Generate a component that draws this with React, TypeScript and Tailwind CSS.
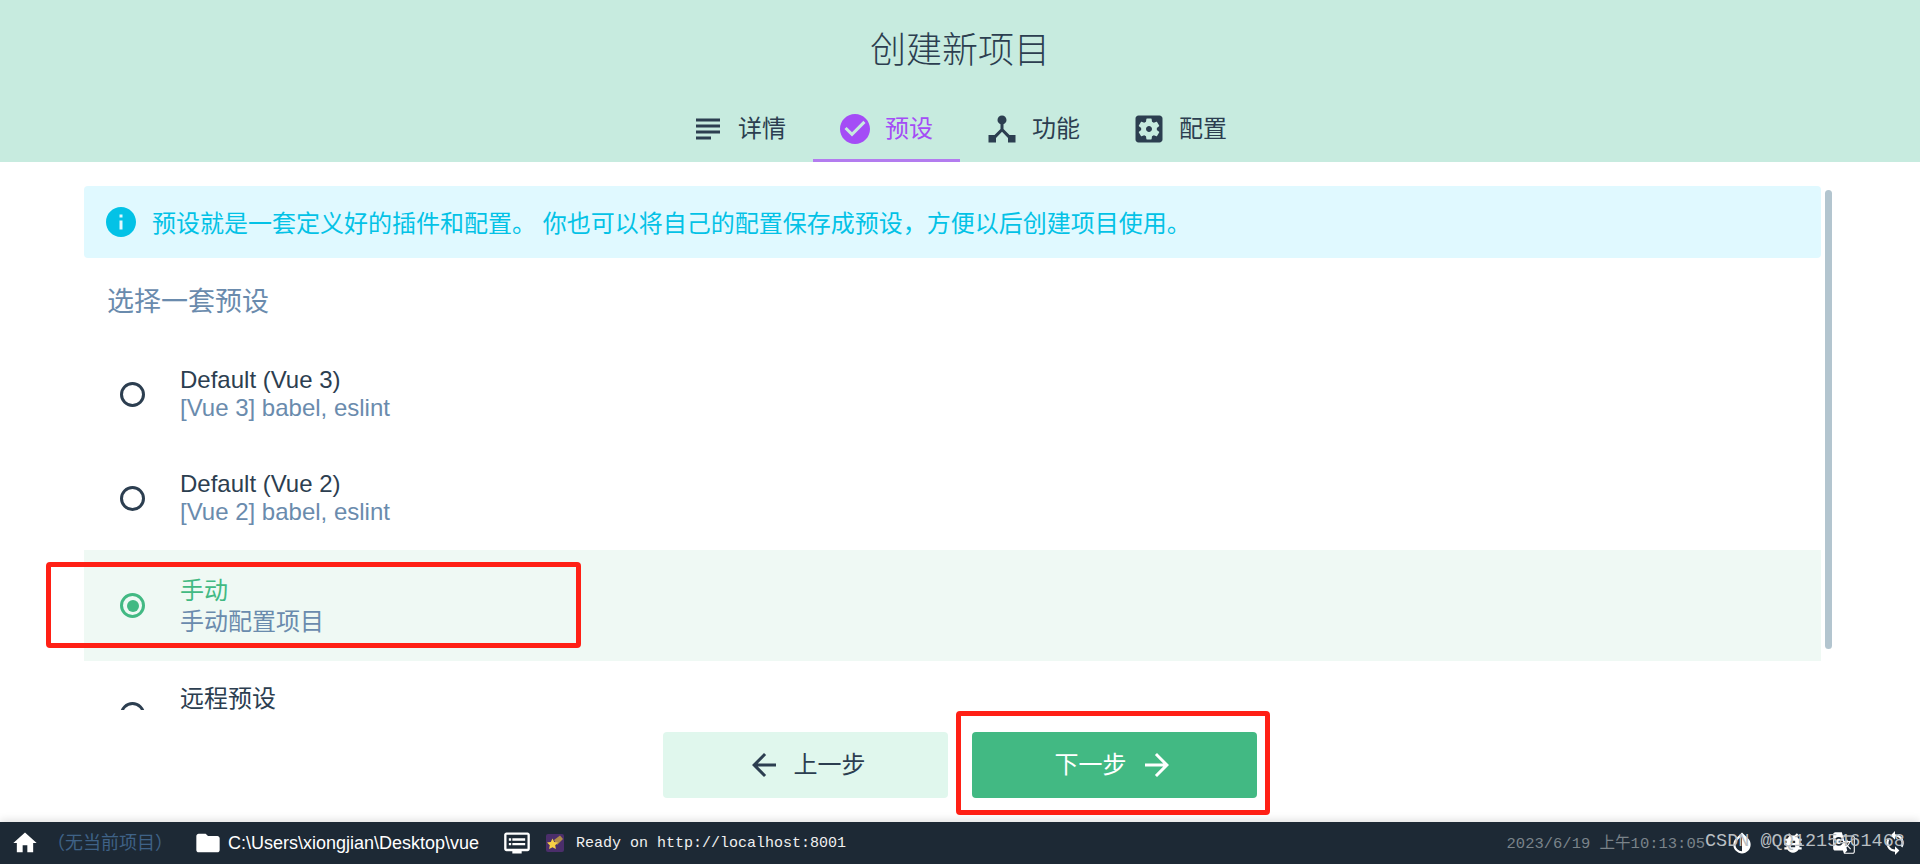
const CJK = '"Liberation Sans", "Noto Sans CJK SC", sans-serif';

const Icon = ({ d, className }: { d: string; className?: string }) => (
  <svg viewBox="0 0 24 24" fill="currentColor" className={className}>
    <path d={d} />
  </svg>
);

const icons = {
  subject: 'M14 17H4v2h10v-2zm6-8H4v2h16V9zM4 15h16v-2H4v2zM4 5v2h16V5H4z',
  check: 'M12 2C6.48 2 2 6.48 2 12s4.48 10 10 10 10-4.48 10-10S17.52 2 12 2zm-2 15l-5-5 1.41-1.41L10 14.17l7.59-7.59L19 8l-9 9z',
  hub: 'M17 16l-4-4V8.82C14.16 8.4 15 7.3 15 6c0-1.66-1.34-3-3-3S9 4.34 9 6c0 1.3.84 2.4 2 2.82V12l-4 4H3v5h5v-3.05l4-4.2 4 4.2V21h5v-5h-4z',
  settings: 'M12 10c-1.1 0-2 .9-2 2s.9 2 2 2 2-.9 2-2-.9-2-2-2zm7-7H5c-1.11 0-2 .9-2 2v14c0 1.1.89 2 2 2h14c1.11 0 2-.9 2-2V5c0-1.1-.89-2-2-2zm-1.75 9c0 .23-.02.46-.05.68l1.48 1.16c.13.11.17.3.08.45l-1.4 2.42c-.09.15-.27.21-.43.15l-1.74-.7c-.36.28-.76.51-1.18.69l-.26 1.85c-.03.17-.18.3-.35.3h-2.8c-.17 0-.32-.13-.35-.29l-.26-1.85c-.43-.18-.82-.41-1.18-.69l-1.74.7c-.16.06-.34 0-.43-.15l-1.4-2.42c-.09-.15-.05-.34.08-.45l1.48-1.16c-.03-.23-.05-.46-.05-.69 0-.23.02-.46.05-.68l-1.48-1.16c-.13-.11-.17-.3-.08-.45l1.4-2.42c.09-.15.27-.21.43-.15l1.74.7c.36-.28.76-.51 1.18-.69l.26-1.85c.03-.17.18-.3.35-.3h2.8c.17 0 .32.13.35.29l.26 1.85c.43.18.82.41 1.18.69l1.74-.7c.16-.06.34 0 .43.15l1.4 2.42c.09.15.05.34-.08.45l-1.48 1.16c.03.23.05.46.05.69z',
  info: 'M12 2C6.48 2 2 6.48 2 12s4.48 10 10 10 10-4.48 10-10S17.52 2 12 2zm1 15h-2v-6h2v6zm0-8h-2V7h2v2z',
  back: 'M20 11H7.83l5.59-5.59L12 4l-8 8 8 8 1.41-1.41L7.83 13H20v-2z',
  forward: 'M12 4l-1.41 1.41L16.17 11H4v2h12.17l-5.58 5.59L12 20l8-8z',
  home: 'M10 20v-6h4v6h5v-8h3L12 3 2 12h3v8z',
  folder: 'M10 4H4c-1.1 0-1.99.9-1.99 2L2 18c0 1.1.9 2 2 2h16c1.1 0 2-.9 2-2V8c0-1.1-.9-2-2-2h-8l-2-2z',
  dvr: 'M21 3H3c-1.1 0-2 .9-2 2v12c0 1.1.9 2 2 2h5v2h8v-2h5c1.1 0 1.99-.9 1.99-2L23 5c0-1.1-.9-2-2-2zm0 14H3V5h18v12zm-2-9H8v2h11V8zm0 4H8v2h11v-2zM7 8H5v2h2V8zm0 4H5v2h2v-2z',
  drop: 'M17.66 7.93L12 2.27 6.34 7.93c-3.12 3.12-3.12 8.19 0 11.31C7.9 20.8 9.95 21.58 12 21.58c2.05 0 4.1-.78 5.66-2.34 3.12-3.12 3.12-8.19 0-11.31zM12 19.59c-1.6 0-3.11-.62-4.24-1.76C6.62 16.69 6 15.19 6 13.59s.62-3.11 1.76-4.24L12 5.1v14.49z',
  bug: 'M20 8h-2.81c-.45-.78-1.07-1.45-1.82-1.96L17 4.41 15.59 3l-2.17 2.17C12.96 5.06 12.49 5 12 5c-.49 0-.96.06-1.41.17L8.41 3 7 4.41l1.62 1.63C7.88 6.55 7.26 7.22 6.81 8H4v2h2.09c-.05.33-.09.66-.09 1v1H4v2h2v1c0 .34.04.67.09 1H4v2h2.81c1.04 1.79 2.97 3 5.19 3s4.15-1.21 5.19-3H20v-2h-2.09c.05-.33.09-.66.09-1v-1h2v-2h-2v-1c0-.34-.04-.67-.09-1H20V8zm-6 8h-4v-2h4v2zm0-4h-4v-2h4v2z',
  translate: 'M20 5h-9.12L10 2H4c-1.1 0-2 .9-2 2v13c0 1.1.9 2 2 2h7l1 3h8c1.1 0 2-.9 2-2V7c0-1.1-.9-2-2-2zM7.17 14.59c-2.25 0-4.09-1.83-4.09-4.09s1.83-4.09 4.09-4.09c1.04 0 1.99.37 2.74 1.07l.07.06-1.23 1.18-.06-.05c-.29-.27-.78-.59-1.52-.59-1.31 0-2.38 1.09-2.38 2.42s1.07 2.42 2.38 2.42c1.37 0 1.96-.87 2.12-1.46H7.08V9.91h3.95l.01.07c.04.21.05.4.05.61 0 2.35-1.61 4-3.92 4zm6.03-1.71c.33.6.74 1.18 1.19 1.7l-.54.53-.65-2.23zm.77-.76h-.99l-.31-1.04h3.99s-.34 1.31-1.56 2.74c-.52-.62-.89-1.23-1.13-1.7zM21 20c0 .55-.45 1-1 1h-7l2-2-.81-2.77.92-.92L17.79 18l.73-.73-2.71-2.68c.9-1.03 1.6-2.25 1.92-3.51H19v-1.04h-3.64V9h-1.04v1.04h-1.96L11.18 6H20c.55 0 1 .45 1 1v13z',
  sync: 'M12 4V1L8 5l4 4V6c3.31 0 6 2.69 6 6 0 1.01-.25 1.97-.7 2.8l1.46 1.46C19.54 15.03 20 13.57 20 12c0-4.42-3.58-8-8-8zm0 14c-3.31 0-6-2.69-6-6 0-1.01.25-1.97.7-2.8L5.24 7.74C4.46 8.97 4 10.43 4 12c0 4.42 3.58 8 8 8v3l4-4-4-4v3z',
};

const tabs = [
  { label: '详情', icon: icons.subject },
  { label: '预设', icon: icons.check, active: true },
  { label: '功能', icon: icons.hub },
  { label: '配置', icon: icons.settings },
];

const presets = [
  { name: 'Default (Vue 3)', desc: '[Vue 3] babel, eslint', h: 'h-[104px]', lh: 'leading-[28px]' },
  { name: 'Default (Vue 2)', desc: '[Vue 2] babel, eslint', h: 'h-[104px]', lh: 'leading-[28px]' },
  { name: '手动', desc: '手动配置项目', h: 'h-[111px]', lh: 'leading-[31px]', selected: true },
  { name: '远程预设', desc: '\u00a0', h: 'h-[106px]', lh: 'leading-[30px]' },
];

const Radio = ({ selected }: { selected?: boolean }) => (
  <div
    className={`w-[25px] h-[25px] shrink-0 rounded-full border-[3px] flex items-center justify-center ${
      selected ? 'border-[#42b983]' : 'border-[#2c3e50]'
    }`}
  >
    {selected && <div className="w-3 h-3 rounded-full bg-[#42b983]" />}
  </div>
);

// shooting star emoji in the task log line
const StarLogo = () => (
  <svg viewBox="0 0 18 18" className="ml-[15px] w-[18px] h-[18px]">
    <rect width="18" height="18" rx="2" fill="#4b2e6b" />
    <path d="M8 6 L14 1.5 L17 5 L11 11 Z" fill="#b08d4a" />
    <path d="M6.5 4.5 L8.2 8 L12 8.6 L9.2 11.2 L9.9 15 L6.5 13.2 L3.1 15 L3.8 11.2 L1 8.6 L4.8 8 Z" fill="#f7cf45" />
  </svg>
);

export default function App() {
  return (
    <div
      className="relative w-[1920px] h-[864px] overflow-hidden flex flex-col bg-white text-[#2c3e50]"
      style={{ fontFamily: CJK }}
    >
      <header className="h-[162px] shrink-0 bg-[#c7ebdf] flex flex-col items-center">
        <h1 className="mt-[27px] h-[48px] text-[36px] leading-[48px] font-light">创建新项目</h1>
        <nav className="mt-[27px] flex">
          {tabs.map((t) => (
            <div
              key={t.label}
              className={`w-[147px] h-[60px] flex items-center justify-center gap-[12px] border-b-[3px] pb-[3px] pr-[3px] ${
                t.active ? 'border-[#b37cef] text-[#a44cf6]' : 'border-transparent'
              }`}
            >
              <Icon d={t.icon} className="w-9 h-9" />
              <span className="text-[24px] leading-none">{t.label}</span>
            </div>
          ))}
        </nav>
      </header>

      <main className="h-[548px] shrink-0 flex pl-[84px] pt-6 overflow-hidden">
        <div className="w-[1737px] shrink-0 flex flex-col">
          <div className="h-[72px] shrink-0 rounded bg-[#e0f9ff] text-[#03c2e6] flex items-center pl-[19px] gap-[13px]">
            <Icon d={icons.info} className="w-9 h-9" />
            <span className="text-[24px] pt-[3px]">预设就是一套定义好的插件和配置。 你也可以将自己的配置保存成预设，方便以后创建项目使用。</span>
          </div>
          <div className="h-[84px] shrink-0 pl-[23px] pt-[5px] flex items-center text-[27px] text-[#6a8bad]">选择一套预设</div>
          {presets.map((p) => (
            <div
              key={p.name}
              className={`${p.h} shrink-0 flex items-center pl-9 gap-[35px] ${p.selected ? 'bg-[#eff9f4]' : ''}`}
            >
              <Radio selected={p.selected} />
              <div className="flex flex-col">
                <span className={`text-[24px] ${p.lh} ${p.selected ? 'text-[#42b983]' : ''}`}>{p.name}</span>
                <span className={`text-[24px] ${p.lh} text-[#6a8bad]`}>{p.desc}</span>
              </div>
            </div>
          ))}
        </div>
        <div className="ml-1 mt-1 w-[7px] h-[459px] shrink-0 rounded-full bg-[#b3c5cf]" />
      </main>

      <div className="h-[112px] shrink-0 flex justify-center items-start pt-[22px] gap-6">
        <button className="w-[285px] h-[66px] rounded bg-[#e0f7ed] flex items-center justify-center gap-3 text-[24px]">
          <Icon d={icons.back} className="w-9 h-9" />
          上一步
        </button>
        <button className="w-[285px] h-[66px] rounded bg-[#42b983] text-white flex items-center justify-center gap-3 text-[24px]">
          下一步
          <Icon d={icons.forward} className="w-9 h-9" />
        </button>
      </div>

      <footer className="h-[42px] shrink-0 bg-[#1d2935] text-white flex items-center shadow-[0_-2px_8px_rgba(0,0,0,0.12)] relative">
        <Icon d={icons.home} className="w-7 h-7 ml-[11px]" />
        <span className="ml-[8px] w-[147px] text-[18px] text-[#3f6287]">（无当前项目）</span>
        <Icon d={icons.folder} className="w-7 h-7" />
        <span className="ml-[6px] w-[275px] text-[18px]">C:\Users\xiongjian\Desktop\vue</span>
        <Icon d={icons.dvr} className="w-7 h-7" />
        <StarLogo />
        <span className="ml-[12px] pt-[3px] text-[15px] text-[#f0f0f0]" style={{ fontFamily: '"Liberation Mono", monospace' }}>
          Ready on http://localhost:8001
        </span>
        <span className="ml-auto mr-[215px] pt-[3px] text-[15.5px] text-[#7a838a]" style={{ fontFamily: '"Liberation Mono", "Noto Sans CJK SC", monospace' }}>
          2023/6/19 上午10:13:05
        </span>
      </footer>

      {/* status icons with the CSDN watermark printed over them */}
      <div className="absolute right-[12px] bottom-[6px] h-[30px] flex items-center gap-[25px] text-white">
        <Icon d={icons.drop} className="w-[26px] h-[26px]" />
        <Icon d={icons.bug} className="w-[26px] h-[26px]" />
        <Icon d={icons.translate} className="w-[26px] h-[26px]" />
        <Icon d={icons.sync} className="w-[26px] h-[26px]" />
      </div>
      <span className="absolute left-[1705px] bottom-[8px] text-[18.5px] text-[#b9bec2]" style={{ fontFamily: '"Liberation Mono", monospace' }}>
        CSDN @QQ1215461468
      </span>

      {/* red annotation boxes */}
      <div className="absolute left-[46px] top-[562px] w-[535px] h-[86px] border-[5px] border-[#ff2015] rounded" />
      <div className="absolute left-[956px] top-[711px] w-[314px] h-[104px] border-[5px] border-[#ff2015] rounded" />
    </div>
  );
}
